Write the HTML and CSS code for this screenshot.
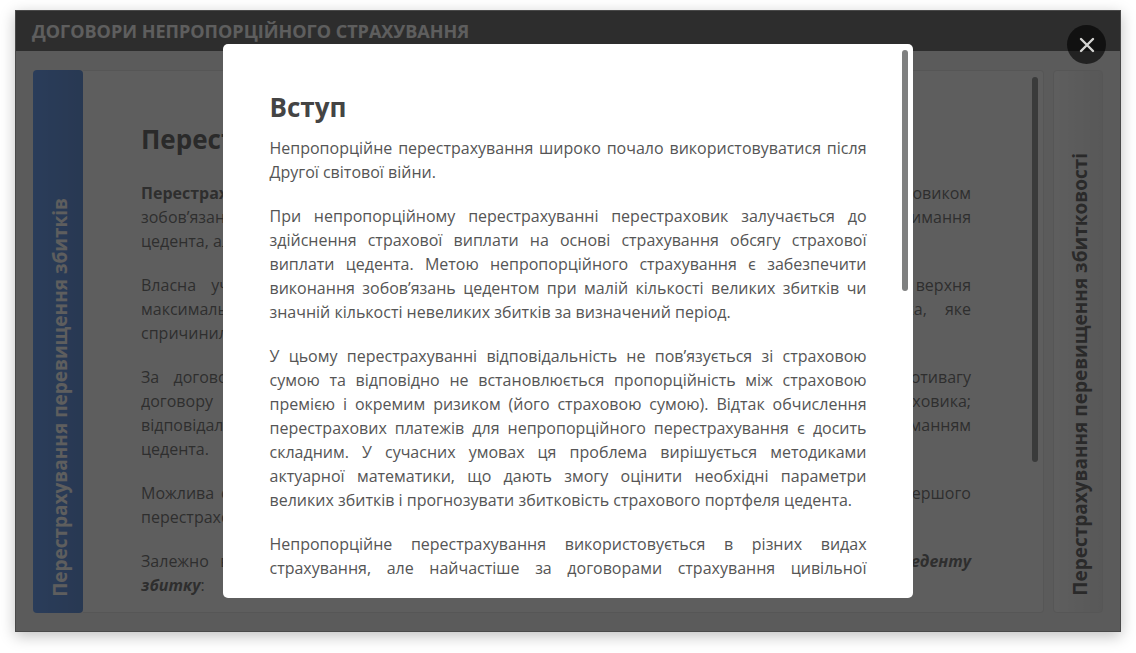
FILE: index.html
```html
<!DOCTYPE html>
<html lang="uk">
<head>
<meta charset="utf-8">
<title>Договори непропорційного страхування</title>
<link rel="stylesheet" href="styles.css">
</head>
<body>
<div class="frame">
  <header class="topbar"><h1>ДОГОВОРИ НЕПРОПОРЦІЙНОГО СТРАХУВАННЯ</h1></header>
  <main class="accordion">
    <button class="tab tab-active" type="button"><span>Перестрахування перевищення збитків</span></button>
    <section class="panel">
      <article class="panel-text">
        <h2>Перестрахування перевищення збитків</h2>
        <p><b>Перестрахування перевищення збитків</b> передбачає прийняття відповідним перестраховиком<br>
        зобов’язань з відшкодування частини збитку, що перевищує обсяг власного утримання<br>
        <span class="last">цедента, але в межах установленого ліміту відповідальності.</span></p>
        <p>Власна участь цедента у покритті кожного збитку називається пріоритетом, а його верхня<br>
        максимальна межа відповідальності перестраховика визначається за розміром ризика, яке<br>
        <span class="last">спричинило настання страхового випадку.</span></p>
        <p>За договором ексцедента збитку перестраховик надає цеденту повне покриття на противагу<br>
        договору пропорційного страхування, не бере участі в ризиках перестраховика;<br>
        відповідальність настає лише за збитками, що є більшими за пріоритет, утриманням<br>
        <span class="last">цедента.</span></p>
        <p>Можлива ситуація, коли збиток перевищує ліміт відповідальності за всіма умовами договору першого<br>
        <span class="last">перестраховика.</span></p>
        <p>Залежно від умов страхового покриття розрізняють декілька різних видів договорів <b><i>ексцеденту</i></b><br>
        <span class="last"><b><i>збитку</i></b>:</span></p>
      </article>
      <div class="scroll"><div class="thumb thumb-panel"></div></div>
    </section>
    <button class="tab tab-next" type="button"><span>Перестрахування перевищення збитковості</span></button>
  </main>
  <div class="overlay">
    <div class="modal" role="dialog" aria-modal="true" aria-labelledby="intro">
      <div class="modal-text">
        <h2 id="intro">Вступ</h2>
        <p>Непропорційне перестрахування широко почало використовуватися після Другої світової війни.</p>
        <p>При непропорційному перестрахуванні перестраховик залучається до здійснення страхової виплати на основі страхування обсягу страхової виплати цедента. Метою непропорційного страхування є забезпечити виконання зобов’язань цедентом при малій кількості великих збитків чи значній кількості невеликих збитків за визначений період.</p>
        <p>У цьому перестрахуванні відповідальність не пов’язується зі страховою сумою та відповідно не встановлюється пропорційність між страховою премією і окремим ризиком (його страховою сумою). Відтак обчислення перестрахових платежів для непропорційного перестрахування є досить складним. У сучасних умовах ця проблема вирішується методиками актуарної математики, що дають змогу оцінити необхідні параметри великих збитків і прогнозувати збитковість страхового портфеля цедента.</p>
        <p class="continued">Непропорційне перестрахування використовується в різних видах страхування, але найчастіше за договорами страхування цивільної</p>
      </div>
      <div class="scroll"><div class="thumb thumb-modal"></div></div>
    </div>
    <button class="close" type="button" aria-label="Закрити">
      <svg viewBox="0 0 16 16" width="16" height="16" aria-hidden="true"><path d="M2 2L14 14M14 2L2 14" fill="none" stroke="#d4d4d2" stroke-width="2.4" stroke-linecap="round"/></svg>
    </button>
  </div>
</div>
</body>
</html>
```
FILE: styles.css
```css
* { box-sizing: border-box; }
body {
  margin: 0;
  height: 100vh;
  padding: 10px 15px 21px;
  background: #fff;
  color: #444;
  font: 16px/24px "Open Sans", "Noto Sans", sans-serif;
}
.frame {
  position: relative;
  display: flex;
  flex-direction: column;
  height: 100%;
  background: #f2f2f2;
  border: 1px solid #b5b5b5;
  box-shadow: 0 4px 14px rgba(0, 0, 0, .25);
}
.topbar {
  padding: 8px 16px;
  background: #4f4f4f;
}
h1 { margin: 0; color: #fff; font-size: 18px; line-height: 24px; font-weight: 700; }
h2 { margin: 0; font-size: 26px; line-height: 36px; font-weight: 700; }
p { margin: 0 0 20px; text-align: justify; }
button { border: 0; padding: 0; font: inherit; cursor: pointer; }

.accordion {
  flex: 1;
  min-height: 0;
  display: flex;
  padding: 19px 17px 18px;
}
.tab {
  flex: none;
  width: 50px;
  padding: 16px 0 16px 4px;
  border-radius: 4px;
  display: flex;
  justify-content: center;
  align-items: flex-end;
  font-size: 19px;
  font-weight: 700;
}
.tab span {
  writing-mode: vertical-rl;
  transform: rotate(180deg);
  white-space: nowrap;
}
.tab-active {
  background: linear-gradient(90deg, #4688f0, #3e78d4);
  color: #fff;
}
.tab-next {
  margin-left: 9px;
  background: linear-gradient(90deg, #fff, #e9e9e9);
  border: 1px solid #e2e2e2;
  color: #444;
}
.panel {
  flex: 1;
  min-width: 0;
  display: flex;
  overflow: hidden;
  background: #fff;
  border: 1px solid #e2e2e2;
  border-left: 0;
  border-radius: 0 4px 4px 0;
}
.panel-text { flex: 1; padding: 50px 61px 0 58px; color: #555; }
.panel-text h2 { margin-bottom: 24px; color: #444; }
.panel-text p { text-align-last: justify; white-space: nowrap; }
.panel-text .last { display: block; text-align-last: left; }
.scroll { flex: none; width: 11px; padding-top: 6px; }
.thumb { width: 6px; border-radius: 3px; background: #7f8080; }
.thumb-panel { height: 72%; }
.thumb-modal { height: 44%; }

.overlay {
  position: absolute;
  inset: -1px;
  display: flex;
  justify-content: center;
  padding: 34px 0;
  background: rgba(32, 32, 32, .72);
}
.modal {
  display: flex;
  width: 62.3%;
  overflow: hidden;
  background: #fff;
  border-radius: 5px;
}
.modal-text { flex: 1; padding: 45px 35px 0 46px; color: #555; }
.modal-text h2 { margin-bottom: 11px; color: #444; }
.modal-text .continued { text-align-last: justify; }
.close {
  position: absolute;
  top: 15px;
  right: 15px;
  width: 39px;
  height: 39px;
  border-radius: 50%;
  display: grid;
  place-items: center;
  background: rgba(0, 0, 0, .62);
}
```
